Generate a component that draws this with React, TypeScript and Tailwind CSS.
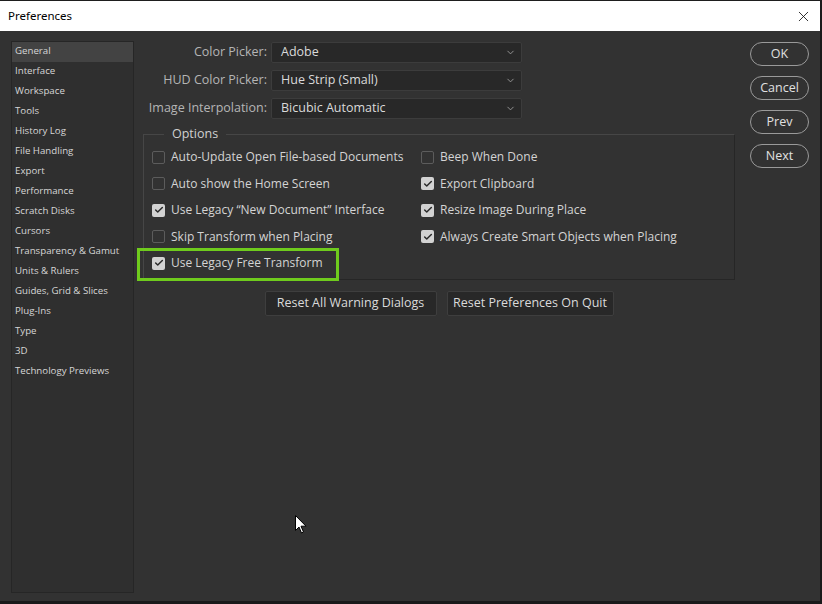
import React from 'react';
import { X, ChevronDown, Check } from 'lucide-react';

const sections = [
  'General',
  'Interface',
  'Workspace',
  'Tools',
  'History Log',
  'File Handling',
  'Export',
  'Performance',
  'Scratch Disks',
  'Cursors',
  'Transparency & Gamut',
  'Units & Rulers',
  'Guides, Grid & Slices',
  'Plug-Ins',
  'Type',
  '3D',
  'Technology Previews',
];

const pickers = [
  { label: 'Color Picker:', value: 'Adobe' },
  { label: 'HUD Color Picker:', value: 'Hue Strip (Small)' },
  { label: 'Image Interpolation:', value: 'Bicubic Automatic' },
];

const leftOptions = [
  { label: 'Auto-Update Open File-based Documents', checked: false },
  { label: 'Auto show the Home Screen', checked: false },
  { label: 'Use Legacy \u201cNew Document\u201d Interface', checked: true },
  { label: 'Skip Transform when Placing', checked: false },
  { label: 'Use Legacy Free Transform', checked: true, highlight: true },
];

const rightOptions = [
  { label: 'Beep When Done', checked: false },
  { label: 'Export Clipboard', checked: true },
  { label: 'Resize Image During Place', checked: true },
  { label: 'Always Create Smart Objects when Placing', checked: true },
];

const font = { fontFamily: '"Open Sans", "Noto Sans", sans-serif' };

const CheckBox = ({ checked }: { checked: boolean }) =>
  checked ? (
    <span className="w-[13px] h-[13px] rounded-[2px] bg-[#d2d2d2] flex items-center justify-center shrink-0">
      <Check size={10} strokeWidth={3.5} className="text-[#2a2a2a]" />
    </span>
  ) : (
    <span className="w-[13px] h-[13px] rounded-[2px] border border-[#5c5c5c] shrink-0" />
  );

const Option = ({ label, checked, highlight }: { label: string; checked: boolean; highlight?: boolean }) => (
  <div className="relative h-[26.5px] flex items-center gap-[6px] text-[12px] text-[#d4d4d4]">
    <CheckBox checked={checked} />
    <span className="whitespace-nowrap">{label}</span>
    {highlight && (
      <div className="absolute left-[-15px] top-[-2px] w-[202px] h-[33px] border-[3px] border-[#6fcb1d]" />
    )}
  </div>
);

const SideButton = ({ label }: { label: string }) => (
  <button className="w-[59px] h-[24px] rounded-full border-[1.5px] border-[#9a9a9a] text-[12.5px] text-[#e0e0e0] flex items-center justify-center">
    {label}
  </button>
);

export default function App() {
  return (
    <div
      className="relative w-[822px] h-[604px] bg-[#323232] border-t border-[#1e1e1e] border-b-[3px] border-b-[#1a1a1a] border-r-2 border-r-[#1a1a1a] flex flex-col overflow-hidden"
      style={font}
    >
      {/* Title bar */}
      <div className="h-[30px] bg-white flex items-center justify-between pl-[8px] pr-[8px] shrink-0">
        <span className="text-[11.5px] text-black" style={{ fontFamily: '"Noto Sans", sans-serif' }}>
          Preferences
        </span>
        <X size={17} strokeWidth={1.2} className="text-[#111]" />
      </div>

      <div className="flex flex-1 pt-[10px] pl-[11px]">
        {/* Sidebar */}
        <nav className="w-[123px] h-[552px] bg-[#2f2f2f] border border-[#262626] shrink-0">
          {sections.map((s, i) => (
            <div
              key={s}
              className={`h-[20px] flex items-center pl-[3px] pb-[1px] text-[9.7px] text-[#d6d6d6] ${i === 0 ? 'bg-[#434343]' : ''}`}
            >
              {s}
            </div>
          ))}
        </nav>

        {/* Main */}
        <div className="w-[605px] shrink-0 flex flex-col pl-[9px]">
          <div className="flex flex-col gap-[7px] pt-[1px]">
            {pickers.map((p) => (
              <div key={p.label} className="flex items-center">
                <span className="w-[124px] text-right text-[12.5px] text-[#b5b5b5] whitespace-nowrap">{p.label}</span>
                <div className="ml-[4px] w-[251px] h-[21px] bg-[#282828] border border-[#3c3c3c] rounded-[2px] flex items-center justify-between pl-[9px] pr-[5px]">
                  <span className="text-[12.5px] text-[#dadada]">{p.value}</span>
                  <ChevronDown size={11} strokeWidth={2} className="text-[#9a9a9a]" />
                </div>
              </div>
            ))}
          </div>

          <fieldset className="mt-[6px] w-[592px] h-[155px] border border-[#262626] border-t-[#464646] border-l-[#464646] pl-[8px]">
            <legend className="ml-[12px] px-[8px] text-[12.5px] text-[#d0d0d0]">Options</legend>
            <div className="flex">
              <div className="w-[269px] flex flex-col">
                {leftOptions.map((o) => (
                  <Option key={o.label} {...o} />
                ))}
              </div>
              <div className="flex flex-col">
                {rightOptions.map((o) => (
                  <Option key={o.label} {...o} />
                ))}
              </div>
            </div>
          </fieldset>

          <div className="w-[592px] flex justify-center gap-[10px] mt-[11px]">
            <button className="w-[172px] h-[25px] bg-[#282828] border border-[#3e3e3e] rounded-[2px] text-[12.5px] text-[#dadada]">
              Reset All Warning Dialogs
            </button>
            <button className="w-[167px] h-[25px] bg-[#282828] border border-[#3e3e3e] rounded-[2px] text-[12.5px] text-[#dadada]">
              Reset Preferences On Quit
            </button>
          </div>
        </div>

        {/* Right buttons */}
        <div className="flex flex-col gap-[10px] pl-[11px] pt-[1px]">
          <SideButton label="OK" />
          <SideButton label="Cancel" />
          <SideButton label="Prev" />
          <SideButton label="Next" />
        </div>
      </div>

      {/* Mouse cursor */}
      <svg className="absolute left-[295px] top-[514px]" width="12" height="19" viewBox="0 0 12 19">
        <path d="M0.5 0.5 L0.5 15.5 L4 12 L6.5 18 L8.5 17 L6 11.2 L11 11.2 Z" fill="#fff" stroke="#000" strokeWidth="1" />
      </svg>
    </div>
  );
}
